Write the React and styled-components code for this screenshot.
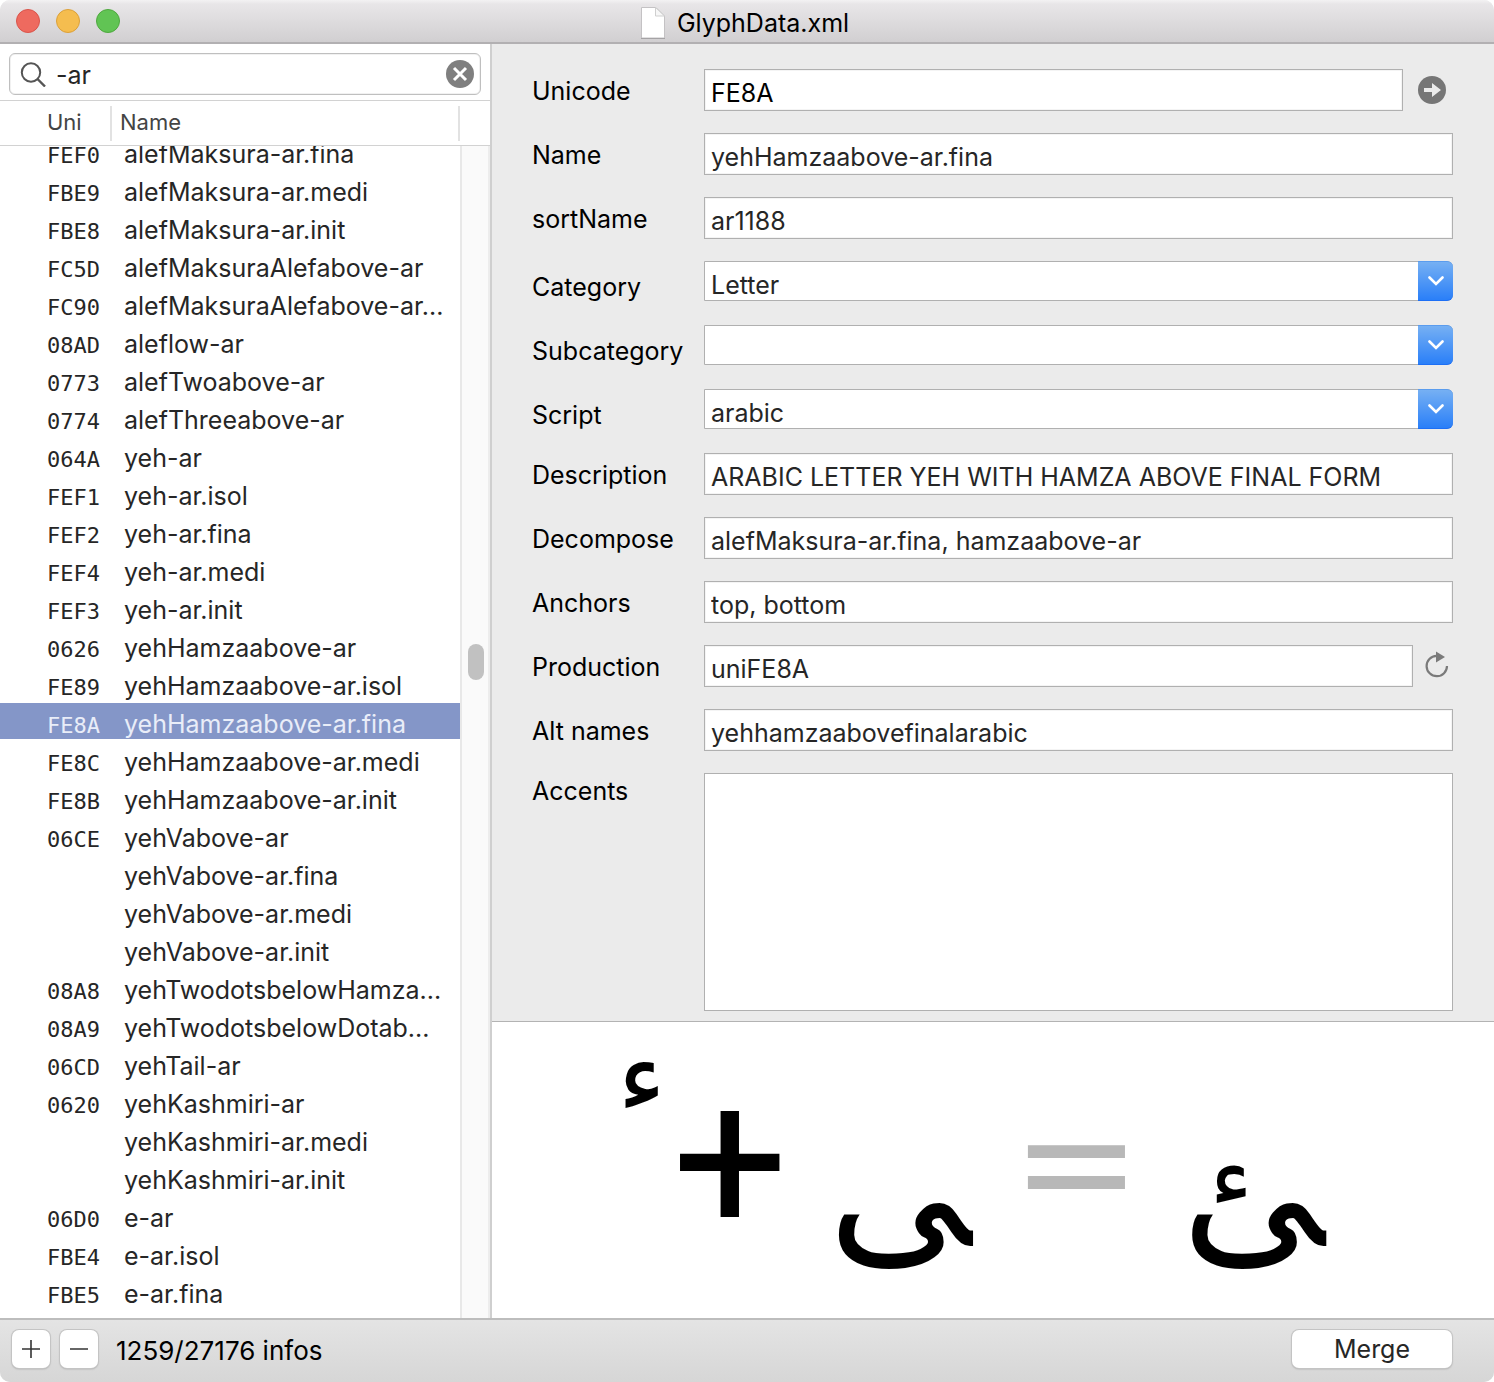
import React, { useLayoutEffect, useRef, useState } from "react";
import styled, { createGlobalStyle } from "styled-components";

const Global = createGlobalStyle`
  *, *::before, *::after { box-sizing: border-box; }
  html, body { margin: 0; background: #fff; }
  body, button, input, select, textarea {
    font-family: Inter, "Liberation Sans", sans-serif;
    font-size: 25px;
  }
`;

const Window = styled.div`
  display: flex;
  flex-direction: column;
  height: 100vh;
  border-radius: 10px;
  overflow: hidden;
  background: #ebebeb;
  color: #000;
`;

const TitleBar = styled.header`
  display: grid;
  grid-template-columns: 1fr auto 1fr;
  align-items: center;
  height: 44px;
  flex: none;
  padding: 0 16px;
  background: linear-gradient(#f3f2f3, #e8e6e8 4px, #d1cfd1);
  border-bottom: 2px solid #b2b0b2;
`;

const Lights = styled.div`
  display: flex;
  gap: 16px;
`;

const Light = styled.button`
  width: 24px;
  height: 24px;
  padding: 0;
  border: 1px solid ${(p) => p.$edge};
  border-radius: 50%;
  background: ${(p) => p.$fill};
`;

const Title = styled.h1`
  display: flex;
  align-items: center;
  gap: 12px;
  margin: 0;
  padding: 3px 4px 0 0;
  font-size: 25px;
  line-height: 32px;
  font-weight: 400;
`;

const Panes = styled.div`
  display: flex;
  flex: 1;
  min-height: 0;
`;

const Sidebar = styled.aside`
  display: flex;
  flex-direction: column;
  flex: none;
  width: 492px;
  background: #fff;
  border-right: 2px solid #cfcfcf;
`;

const SearchBar = styled.div`
  padding: 9px 9px 5px;
  border-bottom: 1px solid #d2d2d2;
`;

const SearchField = styled.label`
  display: flex;
  align-items: center;
  gap: 10px;
  height: 42px;
  padding: 0 6px 0 10px;
  border: 1px solid #bfbfbf;
  border-radius: 6px;
  box-shadow: inset 0 0 0 1px #f1f1f1;

  input {
    flex: 1;
    min-width: 0;
    padding: 2px 0 0;
    border: 0;
    outline: 0;
    background: none;
    color: #262626;
  }
`;

const IconButton = styled.button`
  display: flex;
  padding: 0;
  border: 0;
  background: none;
`;

const ListArea = styled.div`
  display: flex;
  flex: 1;
  min-height: 0;
`;

const Scroller = styled.div`
  flex: 1;
  overflow-y: scroll;
  scrollbar-width: none;
`;

const GlyphTable = styled.table`
  width: 100%;
  margin-bottom: 24px;
  table-layout: fixed;
  border-spacing: 0;
`;

const HeadCell = styled.th`
  position: sticky;
  top: 0;
  width: ${(p) => p.$width};
  height: 45px;
  padding: 0 0 2px ${(p) => p.$indent};
  border-bottom: 1px solid #d2d2d2;
  background:
    linear-gradient(#e2e2e2, #e2e2e2) right center / 2px 35px no-repeat,
    #fff;
  color: #444;
  font-size: 22px;
  line-height: 28px;
  font-weight: 400;
  text-align: left;
`;

const Row = styled.tr`
  color: ${(p) => (p.$selected ? "#e9edf8" : "#262626")};

  td {
    height: 38px;
    padding: 6px 0 0 12px;
    border-bottom: 2px solid transparent;
    background: ${(p) => (p.$selected ? "#8496c8" : "#fff")};
    background-clip: padding-box;
    line-height: 30px;
    white-space: nowrap;
  }

  td:first-child {
    padding: 10px 0 0 47px;
    font-family: "DejaVu Sans Mono", "Liberation Mono", monospace;
    font-size: 22px;
    line-height: 26px;
  }
`;

const Gutter = styled.div`
  display: flex;
  flex-direction: column;
  flex: none;
  width: 30px;
`;

const GutterCap = styled.div`
  height: 45px;
  border-bottom: 1px solid #d2d2d2;
`;

const Track = styled.div`
  display: flex;
  flex-direction: column;
  align-items: center;
  flex: 1;
  padding-left: 2px;
  background: #fafafa;
  border-left: 2px solid #e8e8e8;
  border-right: 2px solid #ededed;

  &::before {
    content: "";
    flex: 498 0 0;
  }

  &::after {
    content: "";
    flex: 638 0 0;
  }
`;

const Thumb = styled.div`
  width: 16px;
  height: 36px;
  border-radius: 8px;
  background: #c1c1c1;
`;

const Detail = styled.main`
  display: flex;
  flex-direction: column;
  flex: 1;
  min-width: 0;
`;

const Form = styled.form`
  display: flex;
  flex-direction: column;
  gap: 22px;
  padding: 25px 41px 10px 40px;
  border-bottom: 1px solid #b3b3b3;
`;

const Field = styled.div`
  display: grid;
  grid-template-columns: 172px 1fr auto;
  align-items: start;
  min-height: 42px;

  > label {
    padding-top: ${(p) => (p.$kind === "combo" ? 10 : p.$kind === "area" ? 2 : 6)}px;
    line-height: 32px;
  }
`;

const TextInput = styled.input`
  width: 100%;
  min-width: 0;
  height: 42px;
  padding: 6px 6px 0;
  border: 1px solid #b0b0b0;
  border-radius: 0;
  outline: 0;
  background: #fff;
  box-shadow: inset 0 0 0 1px #f4f4f4;
  color: ${(p) => (p.$strong ? "#000" : "#262626")};
`;

const Accents = styled.textarea`
  display: block;
  width: 100%;
  height: 238px;
  padding: 4px 6px;
  border: 1px solid #b0b0b0;
  outline: 0;
  background: #fff;
  resize: none;
`;

const Combo = styled.div`
  display: flex;
  position: relative;

  select {
    flex: 1;
    height: 40px;
    padding: 8px 40px 0 6px;
    border: 1px solid #b0b0b0;
    border-radius: 0 6px 6px 0;
    outline: 0;
    appearance: none;
    background: #fff;
    color: #262626;
  }
`;

const ComboArrow = styled.span`
  position: absolute;
  top: 0;
  right: 0;
  bottom: 0;
  display: flex;
  align-items: center;
  justify-content: center;
  width: 35px;
  border: solid #5a9cee;
  border-width: 1px 0;
  border-bottom-color: #1d6ff5;
  border-radius: 0 6px 6px 0;
  background: linear-gradient(#76b0f3, #2a7ff8);
  pointer-events: none;
`;

const Accessory = styled(IconButton)`
  padding: ${(p) => p.$pad};
`;

const Preview = styled.section`
  display: flex;
  flex: 1;
  align-items: center;
  justify-content: center;
  gap: 40px;
  min-height: 0;
  padding-right: 44px;
  overflow: hidden;
  background: #fff;
`;

const Accent = styled.div`
  display: flex;
  align-items: center;
  gap: 6px;
`;

const Sign = styled.span`
  padding-bottom: 14px;
  color: ${(p) => p.$color};
  font-family: ${(p) => p.$face}, sans-serif;
  font-size: ${(p) => p.$size};
  line-height: 200px;
`;

const Arabic = styled.span`
  padding-top: ${(p) => p.$drop};
  padding-bottom: ${(p) => p.$lift};
  font-family: "DejaVu Sans", sans-serif;
  font-size: ${(p) => p.$size};
  line-height: 1;
`;

const Footer = styled.footer`
  display: flex;
  align-items: center;
  gap: 10px;
  flex: none;
  height: 64px;
  padding: 0 42px 4px 12px;
  border-top: 2px solid #bdbdbd;
  background: linear-gradient(#e4e4e4, #d6d6d6);
`;

const PushButton = styled.button`
  display: flex;
  align-items: center;
  justify-content: center;
  width: ${(p) => p.$width};
  height: 38px;
  padding: 0;
  border: 0;
  border-radius: 7px;
  background: #fff;
  box-shadow: 0 0 0 1px #c4c4c4, 0 1px 2px #999;
  color: #262626;
`;

const Count = styled.output`
  flex: 1;
  padding: 4px 0 0 8px;
  font-size: 26px;
  line-height: 32px;
`;

const glyphs = [
  ["FEF0", "alefMaksura-ar.fina"],
  ["FBE9", "alefMaksura-ar.medi"],
  ["FBE8", "alefMaksura-ar.init"],
  ["FC5D", "alefMaksuraAlefabove-ar"],
  ["FC90", "alefMaksuraAlefabove-ar..."],
  ["08AD", "aleflow-ar"],
  ["0773", "alefTwoabove-ar"],
  ["0774", "alefThreeabove-ar"],
  ["064A", "yeh-ar"],
  ["FEF1", "yeh-ar.isol"],
  ["FEF2", "yeh-ar.fina"],
  ["FEF4", "yeh-ar.medi"],
  ["FEF3", "yeh-ar.init"],
  ["0626", "yehHamzaabove-ar"],
  ["FE89", "yehHamzaabove-ar.isol"],
  ["FE8A", "yehHamzaabove-ar.fina"],
  ["FE8C", "yehHamzaabove-ar.medi"],
  ["FE8B", "yehHamzaabove-ar.init"],
  ["06CE", "yehVabove-ar"],
  ["", "yehVabove-ar.fina"],
  ["", "yehVabove-ar.medi"],
  ["", "yehVabove-ar.init"],
  ["08A8", "yehTwodotsbelowHamza..."],
  ["08A9", "yehTwodotsbelowDotab..."],
  ["06CD", "yehTail-ar"],
  ["0620", "yehKashmiri-ar"],
  ["", "yehKashmiri-ar.medi"],
  ["", "yehKashmiri-ar.init"],
  ["06D0", "e-ar"],
  ["FBE4", "e-ar.isol"],
  ["FBE5", "e-ar.fina"],
];

const SCROLL_START = 13;

const fields = [
  { id: "unicode", label: "Unicode", value: "FE8A", strong: true, accessory: "go" },
  { id: "name", label: "Name", value: "yehHamzaabove-ar.fina" },
  { id: "sortName", label: "sortName", value: "ar1188" },
  { id: "category", label: "Category", kind: "combo", options: ["Letter", "Mark"] },
  { id: "subcategory", label: "Subcategory", kind: "combo", options: ["", "Ligature"] },
  { id: "script", label: "Script", kind: "combo", options: ["arabic", "latin"] },
  { id: "description", label: "Description", value: "ARABIC LETTER YEH WITH HAMZA ABOVE FINAL FORM" },
  { id: "decompose", label: "Decompose", value: "alefMaksura-ar.fina, hamzaabove-ar" },
  { id: "anchors", label: "Anchors", value: "top, bottom" },
  { id: "production", label: "Production", value: "uniFE8A", accessory: "reload" },
  { id: "alt", label: "Alt names", value: "yehhamzaabovefinalarabic" },
  { id: "accents", label: "Accents", kind: "area" },
];

const FileIcon = () => (
  <svg width="24" height="32" viewBox="0 0 24 32" aria-hidden="true">
    <path d="M.5 .5H15L23.5 9V31H.5Z" fill="#fff" stroke="#c4c2c4" />
    <path d="M14.5 .5V9H23.5Z" fill="#f7f7f7" stroke="#cfcfcf" />
    <path d="M0 31.5H24" stroke="#a5a3a5" />
  </svg>
);

const SearchIcon = () => (
  <svg width="26" height="26" viewBox="0 0 26 26" fill="none" stroke="#555" strokeWidth="2" aria-hidden="true">
    <circle cx="11" cy="11.5" r="9.2" />
    <path d="M17.5 18L25 25.500" strokeWidth="2.4" />
  </svg>
);

const ClearIcon = () => (
  <svg width="28" height="28" viewBox="0 0 28 28" aria-hidden="true">
    <circle cx="14" cy="14" r="14" fill="#7f7f7f" />
    <path d="M8 8L20 20M20 8L8 20" stroke="#fff" strokeWidth="3" />
  </svg>
);

const GoIcon = () => (
  <svg width="28" height="28" viewBox="0 0 28 28" aria-hidden="true">
    <circle cx="14" cy="14" r="14" fill="#767676" />
    <path d="M6 12H14V7L23 14L14 21V16H6Z" fill="#ebebeb" />
  </svg>
);

const ReloadIcon = () => (
  <svg width="24" height="28" viewBox="0 0 24 28" aria-hidden="true">
    <path d="M22 15A10.2 10.2 0 1 1 11.500 4.800" fill="none" stroke="#7a7a7a" strokeWidth="2.200" />
    <path d="M11 0.500L20 6L11 11.500Z" fill="#7a7a7a" />
  </svg>
);

const Chevron = () => (
  <svg width="16" height="10" viewBox="0 0 16 10" fill="none" aria-hidden="true">
    <path d="M1.500 1.500L8 8L14.500 1.500" stroke="#fff" strokeWidth="2.600" strokeLinecap="round" />
  </svg>
);

const PlusIcon = () => (
  <svg width="18" height="18" viewBox="0 0 18 18" stroke="#333" strokeWidth="1.600" aria-hidden="true">
    <path d="M0 9H18M9 0V18" />
  </svg>
);

const MinusIcon = () => (
  <svg width="18" height="18" viewBox="0 0 18 18" stroke="#333" strokeWidth="1.600" aria-hidden="true">
    <path d="M0 9H18" />
  </svg>
);

function Control({ field }) {
  if (field.kind === "combo") {
    return (
      <Combo>
        <select id={field.id} defaultValue={field.options[0]}>
          {field.options.map((o) => (
            <option key={o} value={o}>{o}</option>
          ))}
        </select>
        <ComboArrow><Chevron /></ComboArrow>
      </Combo>
    );
  }
  if (field.kind === "area") return <Accents id={field.id} />;
  return <TextInput id={field.id} defaultValue={field.value} $strong={field.strong} spellCheck={false} />;
}

function GlyphList() {
  const scroller = useRef(null);
  const [selected, setSelected] = useState("yehHamzaabove-ar.fina");

  useLayoutEffect(() => {
    scroller.current.scrollTop = SCROLL_START;
  }, []);

  return (
    <ListArea>
      <Scroller ref={scroller}>
        <GlyphTable>
          <thead>
            <tr>
              <HeadCell $width="112px" $indent="47px">Uni</HeadCell>
              <HeadCell $indent="8px">Name</HeadCell>
            </tr>
          </thead>
          <tbody>
            {glyphs.map(([uni, name]) => (
              <Row key={name} $selected={name === selected} onClick={() => setSelected(name)}>
                <td>{uni}</td>
                <td>{name}</td>
              </Row>
            ))}
          </tbody>
        </GlyphTable>
      </Scroller>
      <Gutter>
        <GutterCap />
        <Track><Thumb /></Track>
      </Gutter>
    </ListArea>
  );
}

export default function App() {
  return (
    <>
      <Global />
      <Window>
        <TitleBar>
          <Lights>
            <Light aria-label="Close" $fill="#ee6a5f" $edge="#d9544b" />
            <Light aria-label="Minimize" $fill="#f5bd4f" $edge="#dba03a" />
            <Light aria-label="Zoom" $fill="#61c454" $edge="#4fa83f" />
          </Lights>
          <Title><FileIcon />GlyphData.xml</Title>
        </TitleBar>
        <Panes>
          <Sidebar>
            <SearchBar>
              <SearchField>
                <SearchIcon />
                <input aria-label="Search" defaultValue="-ar" />
                <IconButton aria-label="Clear search"><ClearIcon /></IconButton>
              </SearchField>
            </SearchBar>
            <GlyphList />
          </Sidebar>
          <Detail>
            <Form onSubmit={(e) => e.preventDefault()}>
              {fields.map((f) => (
                <Field key={f.id} $kind={f.kind}>
                  <label htmlFor={f.id}>{f.label}</label>
                  <Control field={f} />
                  {f.accessory === "go" && (
                    <Accessory type="button" aria-label="Go to glyph" $pad="7px 7px 7px 15px"><GoIcon /></Accessory>
                  )}
                  {f.accessory === "reload" && (
                    <Accessory type="button" aria-label="Reload name" $pad="6px 4px 4px 12px"><ReloadIcon /></Accessory>
                  )}
                </Field>
              ))}
            </Form>
            <Preview>
              <Accent>
                <Arabic $size="104px" $drop="0px" $lift="188px">ء</Arabic>
                <Sign $face="Roboto" $size="204px" $color="#000">+</Sign>
              </Accent>
              <Arabic $size="172px" $drop="34px" $lift="0px">ﻰ</Arabic>
              <Sign $face='"DejaVu Sans"' $size="155px" $color="#b8b8b8">=</Sign>
              <Arabic $size="172px" $drop="34px" $lift="0px">ﺊ</Arabic>
            </Preview>
          </Detail>
        </Panes>
        <Footer>
          <PushButton aria-label="Add" $width="38px"><PlusIcon /></PushButton>
          <PushButton aria-label="Remove" $width="38px"><MinusIcon /></PushButton>
          <Count>1259/27176 infos</Count>
          <PushButton $width="160px">Merge</PushButton>
        </Footer>
      </Window>
    </>
  );
}
